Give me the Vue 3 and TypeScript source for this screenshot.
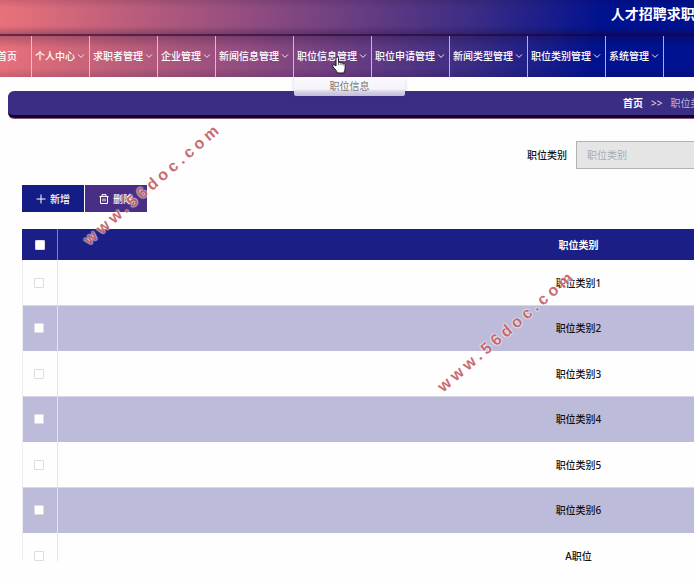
<script setup lang="ts">
import { ref } from 'vue'

interface MenuItem {
  label: string
  children?: string[]
  open?: boolean
}

interface Row {
  id: number
  name: string
}

const menu: MenuItem[] = [
  { label: '个人中心' },
  { label: '求职者管理' },
  { label: '企业管理' },
  { label: '新闻信息管理' },
  { label: '职位信息管理', children: ['职位信息'], open: true },
  { label: '职位申请管理' },
  { label: '新闻类型管理' },
  { label: '职位类别管理' },
  { label: '系统管理' },
]

const rows: Row[] = [
  { id: 1, name: '职位类别1' },
  { id: 2, name: '职位类别2' },
  { id: 3, name: '职位类别3' },
  { id: 4, name: '职位类别4' },
  { id: 5, name: '职位类别5' },
  { id: 6, name: '职位类别6' },
  { id: 7, name: 'A职位' },
]

const keyword = ref('')
const selected = ref<number[]>([])

function toggleAll(event: Event) {
  const checked = (event.target as HTMLInputElement).checked
  selected.value = checked ? rows.map((row) => row.id) : []
}
</script>

<template>
  <div class="page">
    <div class="top">
      <header class="header">
        <h1 class="title">人才招聘求职</h1>
      </header>
      <nav class="nav">
        <a class="nav-item home" href="#">首页</a>
        <div v-for="item in menu" :key="item.label" class="nav-cell">
          <a class="nav-item" href="#">
            <span>{{ item.label }}</span>
            <svg class="chevron" viewBox="0 0 8 8" aria-hidden="true">
              <path d="M1 2.4 4 5.4 7 2.4" />
            </svg>
          </a>
          <div v-if="item.open" class="submenu">
            <a v-for="child in item.children" :key="child" href="#">{{ child }}</a>
          </div>
          <svg v-if="item.open" class="pointer" viewBox="0 0 14 18" aria-hidden="true">
            <path
              d="M4 10V2.3C4 .6 6.600.6 6.600 2.300V6.500C7.300 5.900 8.700 6.100 8.900 7C9.700 6.500 10.900 6.800 11.100 7.700C12 7.300 13.200 7.900 13.200 9V12C13.200 14 12.200 14.600 12 17H5.300C5.100 15.200 3 13.400 1.200 11C.4 9.900.7 8.700 1.700 8.700C2.700 8.700 3.300 9.400 4 10Z"
            />
            <path class="knuckles" d="M6.600 6.500V9M8.900 7.200V9M11.100 7.900V9.500" />
          </svg>
        </div>
      </nav>
    </div>

    <div class="breadcrumb">
      <a class="crumb-home" href="#">首页</a>
      <span>&gt;&gt;</span>
      <span class="crumb-current">职位类别</span>
    </div>

    <main class="content">
      <form class="search" @submit.prevent>
        <label for="category">职位类别</label>
        <input id="category" v-model="keyword" type="text" placeholder="职位类别" />
      </form>

      <div class="actions">
        <button type="button" class="btn add">
          <svg viewBox="0 0 10 10" aria-hidden="true"><path d="M5 .5V9.500M.5 5H9.500" /></svg>
          新增
        </button>
        <button type="button" class="btn remove">
          <svg viewBox="0 0 10 10" aria-hidden="true">
            <path d="M.5 2.500H9.500M3 2.500V.6H7V2.500M1.500 2.500V9.500H8.500V2.500M4 4.500V7.500M6 4.500V7.500" />
          </svg>
          删除
        </button>
      </div>

      <div class="table-wrap">
        <table>
          <thead>
            <tr>
              <th class="check">
                <input
                  type="checkbox"
                  aria-label="全选"
                  :checked="selected.length === rows.length"
                  @change="toggleAll"
                />
              </th>
              <th>职位类别</th>
            </tr>
          </thead>
          <tbody>
            <tr v-for="row in rows" :key="row.id">
              <td class="check">
                <input v-model="selected" type="checkbox" :value="row.id" :aria-label="row.name" />
              </td>
              <td>{{ row.name }}</td>
            </tr>
          </tbody>
        </table>
      </div>
    </main>

    <span class="watermark first">www.56doc.com</span>
    <span class="watermark second">www.56doc.com</span>
  </div>
</template>

<style>
body {
  margin: 0;
  background: #fefefe;
}
</style>

<style scoped>
* {
  box-sizing: border-box;
}

.page {
  position: relative;
  overflow: hidden;
  padding-bottom: 16px;
  font-family: 'Noto Sans', 'Noto Sans CJK SC', sans-serif;
  font-size: 10px;
  line-height: 16px;
  color: #111;
}

a {
  color: inherit;
  text-decoration: none;
}

.top {
  background: linear-gradient(97deg, #ea727a 0%, #bd5e7b 18%, #914c80 36%, #3d2d84 67%, #00128f 86%, #00128f 100%);
  color: #fff;
}

.header {
  height: 36px;
  padding: 4px 0 0 88%;
  border-bottom: 2px solid rgba(30, 0, 45, 0.6);
  background: linear-gradient(rgba(20, 0, 40, 0.12), transparent 8px, transparent 26px, rgba(20, 0, 40, 0.25));
}

.title {
  margin: 0;
  font-size: 14px;
  font-weight: 700;
  line-height: 20px;
  white-space: nowrap;
}

.nav {
  display: flex;
  height: 41px;
  margin-left: -17px;
  background: linear-gradient(rgba(20, 0, 40, 0.22), transparent 12px, transparent 32px, rgba(20, 0, 40, 0.14));
}

.nav-cell {
  position: relative;
  flex: none;
}

.nav-item {
  display: flex;
  align-items: center;
  flex: none;
  gap: 2px;
  height: 100%;
  padding: 0 4px 2px 3px;
  border-right: 1px solid rgba(240, 220, 245, 0.75);
  font-weight: 500;
  white-space: nowrap;
}

.nav-item.home {
  padding: 0 14px 2px;
}

.chevron {
  width: 8px;
  height: 8px;
  fill: none;
  stroke: #f0e6f4;
  stroke-width: 1;
}

.submenu {
  position: absolute;
  z-index: 2;
  top: 100%;
  left: 0;
  width: 111px;
  height: 19px;
  border-radius: 0 0 2px 2px;
  background: linear-gradient(#fbfafd, #f5f3f9 12px, #d5d0e6 15px, #c2bcda);
  box-shadow: 0 1px 4px rgba(60, 50, 120, 0.2);
  color: #777;
  line-height: 18px;
  text-align: center;
}

.submenu a {
  display: block;
}

.pointer {
  position: absolute;
  z-index: 3;
  top: 20px;
  left: 38px;
  width: 14px;
  height: 18px;
  fill: #fff;
  stroke: #16121f;
  stroke-width: 1;
}

.knuckles {
  fill: none;
  stroke-width: 0.7;
}

.breadcrumb {
  display: flex;
  align-items: center;
  gap: 8px;
  height: 27px;
  margin: 14px 0 0 8px;
  padding-left: 615px;
  border-bottom: 3px solid #12022c;
  border-radius: 6px 0 0 6px;
  background: #3b2d83;
  box-shadow: 0 1px 0 #8a5878;
  color: #e2dced;
  white-space: nowrap;
}

.crumb-home {
  color: #fff;
  font-weight: 700;
}

.crumb-current {
  color: #bdb8dc;
}

.content {
  padding: 23px 0 0 22px;
}

.search {
  display: flex;
  align-items: center;
  gap: 9px;
  padding-left: 505px;
}

.search label {
  flex: none;
  font-weight: 500;
}

.search input {
  flex: 1;
  min-width: 0;
  height: 28px;
  padding: 0 10px;
  border: 1px solid #b2b2b2;
  border-right: 0;
  border-radius: 0;
  outline: 0;
  background: #e5e5e5;
  font: inherit;
}

.search input::placeholder {
  color: #a7acb4;
}

.actions {
  display: flex;
  gap: 1px;
  margin-top: 16px;
}

.btn {
  display: flex;
  align-items: center;
  justify-content: center;
  gap: 4px;
  width: 62px;
  height: 27px;
  padding: 0;
  border: 0;
  color: #fff;
  font: inherit;
  font-weight: 500;
}

.btn svg {
  width: 10px;
  height: 10px;
  fill: none;
  stroke: #fff;
  stroke-width: 1;
}

.add {
  background: #141c86;
}

.remove {
  background: #482e85;
}

.table-wrap {
  max-height: 332px;
  margin-top: 17px;
  overflow: hidden;
}

table {
  width: 1077px;
  border-collapse: separate;
  border-spacing: 0;
  table-layout: fixed;
}

th,
td {
  height: 45px;
  padding: 0;
  text-align: center;
}

th {
  height: 31px;
  background: #1b1f85;
  color: #fff;
  font-weight: 700;
}

td {
  font-weight: 500;
}

tbody tr:nth-child(even) td {
  height: 46px;
  padding-bottom: 1px;
  border-top: 1px solid #d8d7e8;
  background: #bdbbda;
}

.check {
  width: 36px;
  border-right: 1px solid #e4e4ef;
}

td.check {
  padding-right: 2px;
  border-left: 1px solid #ededf2;
}

th.check {
  border-right-color: #7f83bd;
}

.check input {
  display: block;
  width: 10px;
  height: 10px;
  margin: 0 auto;
  border: 1px solid #dcdce2;
  border-radius: 1px;
  appearance: none;
  background: #fff;
}

.check input:checked {
  background: #3b2d83;
}

.watermark {
  position: absolute;
  z-index: 4;
  color: rgba(176, 32, 40, 0.68);
  font-family: 'Liberation Sans', sans-serif;
  font-size: 16px;
  font-weight: 700;
  line-height: 20px;
  letter-spacing: 4px;
  text-shadow:
    1px 0 1px rgba(255, 255, 255, 0.5),
    -1px 0 1px rgba(255, 255, 255, 0.5),
    0 1px 1px rgba(255, 255, 255, 0.5),
    0 -1px 1px rgba(255, 255, 255, 0.5);
  transform: rotate(-41deg);
  transform-origin: 0 50%;
  white-space: nowrap;
  pointer-events: none;
}

.first {
  top: 232px;
  left: 86px;
}

.second {
  top: 379px;
  left: 440px;
}
</style>
